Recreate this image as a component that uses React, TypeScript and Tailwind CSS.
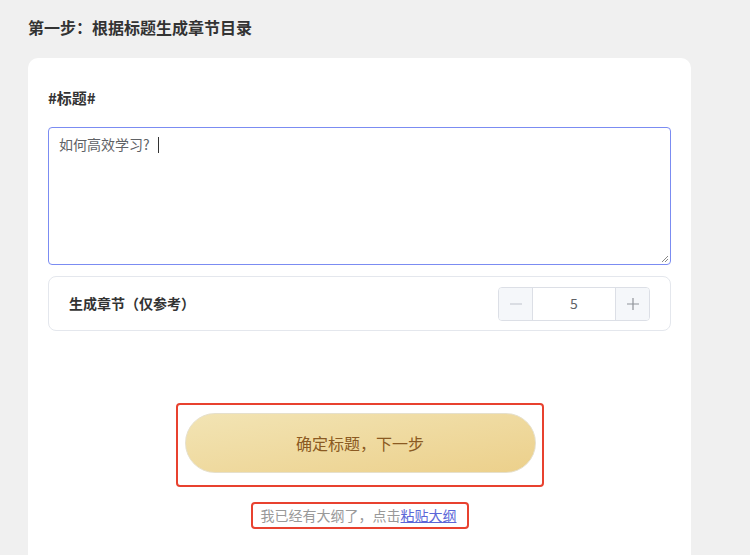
const font = { fontFamily: '"Noto Sans CJK SC", "Noto Sans", sans-serif' };

const ChapterCounter = ({ value }: { value: number }) => (
  <div className="flex h-[34px] w-[152px] overflow-hidden rounded-[4px] border border-[#dcdfe6]">
    <button className="flex w-[34px] items-center justify-center border-r border-[#dcdfe6] bg-[#f5f7fa] text-[#c0c4cc]">
      <svg width="14" height="14" viewBox="0 0 14 14">
        <path d="M1 7h12" stroke="currentColor" strokeWidth="1.2" />
      </svg>
    </button>
    <div className="flex flex-1 items-center justify-center bg-white text-[14px] text-[#606266]">
      {value}
    </div>
    <button className="flex w-[34px] items-center justify-center border-l border-[#dcdfe6] bg-[#f5f7fa] text-[#909399]">
      <svg width="14" height="14" viewBox="0 0 14 14">
        <path d="M1 7h12M7 1v12" stroke="currentColor" strokeWidth="1.2" />
      </svg>
    </button>
  </div>
);

export default function App() {
  return (
    <div className="min-h-screen overflow-hidden bg-[#f0f0f0] pl-[28px] pt-[17px]" style={font}>
      <h1 className="text-[16px] font-bold leading-[20px] text-[#333]">第一步：根据标题生成章节目录</h1>

      <div className="mt-[21px] h-[520px] w-[663px] rounded-[10px] bg-white px-[20px] pt-[30px]">
        <div className="text-[15px] font-bold leading-[20px] text-[#333]">#标题#</div>

        <div className="relative mt-[19px] h-[138px] rounded-[4px] border border-[#7b8cf2] px-[10px] py-[5px] text-[14px] leading-[22px] text-[#606266]">
          如何高效学习?<span className="ml-[8px] inline-block h-[16px] w-px translate-y-[3px] bg-[#333]" />
          <svg className="absolute bottom-[1px] right-[1px]" width="8" height="8" viewBox="0 0 8 8">
            <path d="M7 1L1 7M7 4L4 7" stroke="#888" strokeWidth="1" />
          </svg>
        </div>

        <div className="mt-[11px] flex h-[55px] items-center justify-between rounded-[8px] border border-[#e4e7ed] pl-[20px] pr-[20px]">
          <span className="text-[14px] font-bold text-[#333]">生成章节（仅参考）</span>
          <ChapterCounter value={5} />
        </div>

        <div className="mt-[72px] flex flex-col items-center">
          <div className="rounded-[4px] border-2 border-[#e8412f] pb-[12px] pl-[7px] pr-[6px] pt-[8px]">
            <button className="h-[60px] w-[351px] rounded-full border border-[#e6e0cc] bg-gradient-to-br from-[#f2e4b4] to-[#ecd08b] text-[16px] text-[#8b5a22]">
              确定标题，下一步
            </button>
          </div>

          <div className="mt-[15px] rounded-[4px] border-2 border-[#e8412f] pl-[8px] pr-[10px] py-[1px] text-[14px] leading-[21px] text-[#999]">
            我已经有大纲了，点击<a className="text-[#5b67d8] underline">粘贴大纲</a>
          </div>
        </div>
      </div>
    </div>
  );
}
